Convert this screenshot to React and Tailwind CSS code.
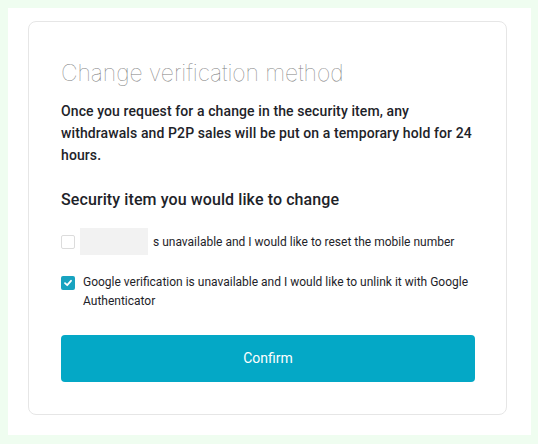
export default function App() {
  return (
    <div className="w-[538px] h-[444px] bg-[#effdf0] px-2 pt-2 pb-[9px] font-['Roboto',sans-serif]">
      <div className="h-full w-[523px] bg-white pt-[13px] pl-[20px]">
        <div className="w-[479px] h-[394px] border border-[#e6e6e6] rounded-lg px-8 pt-[36px]">
          <h1 className="font-['Inter',sans-serif] text-[23px] font-thin text-[#808080] tracking-[-0.1px] leading-[30px]">
            Change verification method
          </h1>
          <p className="mt-[12px] text-[14px] font-medium text-[#1e2329] leading-[22px] tracking-[0.1px]">
            Once you request for a change in the security item, any withdrawals and P2P sales will be put on a temporary hold for 24 hours.
          </p>
          <h2 className="mt-[22px] text-[16px] font-medium text-[#1e2329] leading-[24px] tracking-[0.1px]">
            Security item you would like to change
          </h2>
          <div className="mt-[16px] flex items-center gap-[5px] text-[12px] text-[#1e2329]">
            <span className="w-[14px] h-[14px] rounded-[2px] border border-[#dcdcdc] bg-white shrink-0" />
            <span className="w-[68px] h-[27px] bg-[#f2f2f2] shrink-0" />
            <span>s unavailable and I would like to reset the mobile number</span>
          </div>
          <div className="mt-[18px] flex items-start gap-[8px] text-[12px] text-[#1e2329] leading-[19px]">
            <span className="mt-[3px] w-[14px] h-[14px] rounded-[2px] bg-[#18a3c0] shrink-0 flex items-center justify-center">
              <svg width="10" height="10" viewBox="0 0 10 10" fill="none">
                <path d="M2 5.2 L4.2 7.2 L8 2.8" stroke="white" strokeWidth="1.8" strokeLinecap="round" strokeLinejoin="round" />
              </svg>
            </span>
            <span>Google verification is unavailable and I would like to unlink it with Google Authenticator</span>
          </div>
          <button className="mt-[24px] w-[414px] h-[47px] rounded-[4px] bg-[#04a8c6] text-white text-[14px]">
            Confirm
          </button>
        </div>
      </div>
    </div>
  );
}
